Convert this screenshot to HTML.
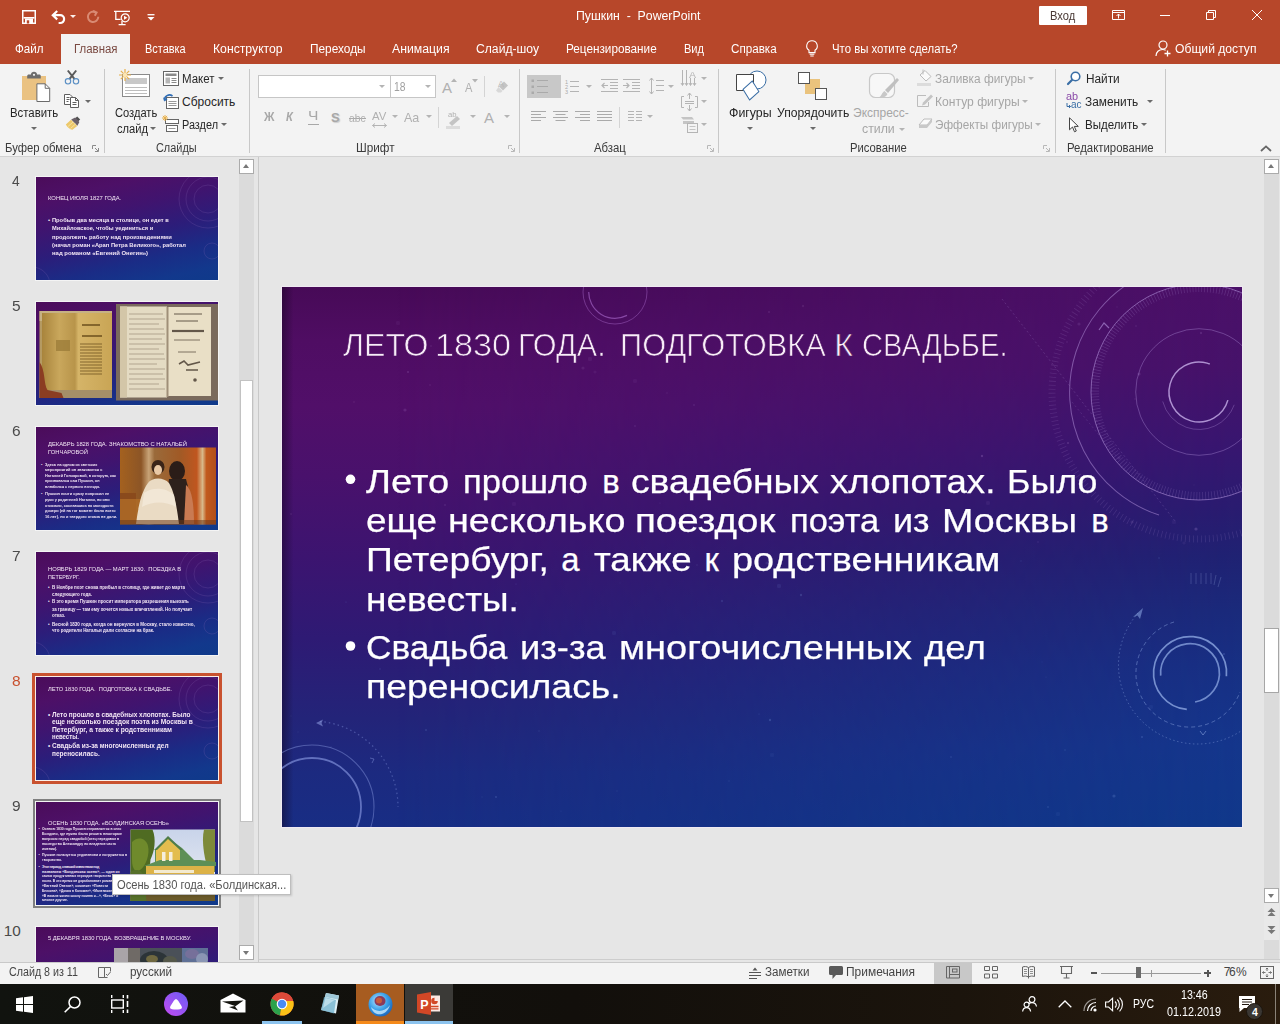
<!DOCTYPE html>
<html lang="ru">
<head>
<meta charset="utf-8">
<title>Пушкин - PowerPoint</title>
<style>
*{box-sizing:border-box;margin:0;padding:0}
html,body{width:1280px;height:1024px;overflow:hidden}
body{position:relative;background:#e6e6e6;font-family:"Liberation Sans",sans-serif;font-size:12px;color:#262626}
.a{position:absolute}
.t{position:absolute;white-space:pre;font-family:"Liberation Sans",sans-serif}
svg{position:absolute;overflow:visible}
.sep{position:absolute;width:1px;background:#c8c8c8;top:69px;height:84px}
.dd{position:absolute;width:0;height:0;border-left:3px solid transparent;border-right:3px solid transparent;border-top:3px solid #6a6a6a}
.ddl{border-top-color:#b4b4b4}
.thumb{position:absolute;left:36px;width:182px;height:103px;overflow:hidden;background:linear-gradient(166deg,#4b0c5a 0%,#4d1067 18%,#40146f 36%,#2c1d7a 56%,#1a2c86 74%,#12388c 90%,#0f3a8a 100%);outline:1px solid #f4f4f4}
.num{position:absolute;left:11px;font-size:16.500px;color:#505050;line-height:18px}
.tt{position:absolute;white-space:pre;color:#f4e9f6;font-family:"Liberation Sans",sans-serif}
</style>
</head>
<body>

<!-- title bar + tabs -->
<div class="a" style="left:0;top:0;width:1280px;height:64px;background:#b7472a"></div>
<div class="a" style="left:61px;top:34px;width:69px;height:31px;background:#f3f3f3"></div>
<!-- quick access icons -->
<svg style="left:22px;top:10px" width="14" height="14" viewBox="0 0 14 14"><path d="M0.750 0.750h12.500v12.500H0.750z" fill="none" stroke="#fff" stroke-width="1.500"/><rect x="1.500" y="7" width="11" height="1.600" fill="#fff"/><rect x="3" y="8.500" width="8" height="5" fill="#fff"/><rect x="4.800" y="10.300" width="2.400" height="3.200" fill="#b7472a"/></svg>
<svg style="left:51px;top:10px" width="15" height="14" viewBox="0 0 15 14"><path d="M6.200 1 1.800 5.200 6.200 9.400M2.200 5.200h7a3.900 3.900 0 0 1 0 7.800H7.600" fill="none" stroke="#fff" stroke-width="2.200" stroke-linejoin="miter"/></svg>
<div class="dd" style="left:70px;top:15px;border-top-color:#fbeee9"></div>
<svg style="left:86px;top:10px" width="14" height="13" viewBox="0 0 14 13"><path d="M9.800 2.400A5.200 5.200 0 1 0 12.300 6.800M7.200 0.800l3.400 1.700-1.800 3.200" fill="none" stroke="#d98a73" stroke-width="2"/></svg>
<svg style="left:114px;top:9.500px" width="17" height="16" viewBox="0 0 17 16"><path d="M0 1.300h16M1.800 1.600v7.800h4.800M8 11v3.400M4.600 14.700h7" fill="none" stroke="#fff" stroke-width="1.300"/><circle cx="11.200" cy="7.800" r="4" fill="#b7472a" stroke="#fff" stroke-width="1.200"/><path d="M10 5.800v4l3.300-2z" fill="#fff"/></svg>
<svg style="left:147px;top:14px" width="8" height="7" viewBox="0 0 8 7"><path d="M0.500 0.700h7" stroke="#fff" stroke-width="1.300"/><path d="M0.500 3h7L4 6.500z" fill="#fff"/></svg>
<!-- sign-in button -->
<div class="a" style="left:1039px;top:6px;width:48px;height:19px;background:#fff;border-radius:1px"></div>
<!-- window controls -->
<svg style="left:1112px;top:10px" width="13" height="10" viewBox="0 0 13 10"><path d="M0.5 0.5h12v9h-12zM0.5 2.500h12" fill="none" stroke="#fff" stroke-width="1"/><path d="M6.500 8.500V4M4.500 6 6.500 4l2 2" fill="none" stroke="#fff" stroke-width="1"/></svg>
<div class="a" style="left:1160px;top:15px;width:10px;height:1px;background:#fff"></div>
<svg style="left:1206px;top:10px" width="10" height="10" viewBox="0 0 10 10"><path d="M0.5 2.500h7v7h-7z M2.500 2.500v-2h7v7h-2" fill="none" stroke="#fff" stroke-width="1"/></svg>
<svg style="left:1252px;top:10px" width="10" height="10" viewBox="0 0 10 10"><path d="M0 0l10 10M10 0 0 10" fill="none" stroke="#fff" stroke-width="1"/></svg>
<!-- lightbulb -->
<svg style="left:806px;top:40px" width="12" height="17" viewBox="0 0 12 17"><path d="M6 0.7a5.2 5.2 0 0 0-3 9.5v2.4h6v-2.400A5.2 5.2 0 0 0 6 0.700zM3.600 14.300h4.800M4.300 16h3.400" fill="none" stroke="#fff" stroke-width="1.1"/></svg>
<!-- share person -->
<svg style="left:1155px;top:40px" width="16" height="17" viewBox="0 0 16 17"><circle cx="8" cy="5" r="4" fill="none" stroke="#fff" stroke-width="1.2"/><path d="M1 16c0-4 3-6.500 6.500-6.500 1.200 0 2.300 0.300 3.200 0.800" fill="none" stroke="#fff" stroke-width="1.2"/><path d="M12.500 10.500v6M9.500 13.500h6" stroke="#fff" stroke-width="1.3"/></svg>

<!-- ribbon -->
<div class="a" style="left:0;top:64px;width:1280px;height:93px;background:#f3f3f3;border-bottom:1px solid #d2d2d2"></div>
<div class="sep" style="left:104px"></div><div class="sep" style="left:249px"></div><div class="sep" style="left:519px"></div><div class="sep" style="left:718px"></div><div class="sep" style="left:1055px"></div><div class="sep" style="left:1165px"></div>
<!-- group launchers -->
<svg style="left:92px;top:145px" width="7" height="7" viewBox="0 0 7 7"><path d="M0.500 4V0.500H4M6.500 3v3.500H3M3 3l3 3" fill="none" stroke="#8a8a8a" stroke-width="1"/></svg>
<svg style="left:508px;top:145px" width="7" height="7" viewBox="0 0 7 7"><path d="M0.500 4V0.500H4M6.500 3v3.500H3M3 3l3 3" fill="none" stroke="#b8b8b8" stroke-width="1"/></svg>
<svg style="left:707px;top:145px" width="7" height="7" viewBox="0 0 7 7"><path d="M0.500 4V0.500H4M6.500 3v3.500H3M3 3l3 3" fill="none" stroke="#b8b8b8" stroke-width="1"/></svg>
<svg style="left:1043px;top:145px" width="7" height="7" viewBox="0 0 7 7"><path d="M0.500 4V0.500H4M6.500 3v3.500H3M3 3l3 3" fill="none" stroke="#b8b8b8" stroke-width="1"/></svg>
<svg style="left:1260px;top:145px" width="12" height="7" viewBox="0 0 12 7"><path d="M1 6l5-4.600L11 6" fill="none" stroke="#666" stroke-width="1.800"/></svg>

<!-- CLIPBOARD -->
<svg style="left:20px;top:70px" width="32" height="34" viewBox="0 0 32 34"><rect x="2" y="6" width="24" height="24" fill="#eac282"/><path d="M7.200 8.400v-2.400c0-1 .6-1.600 1.600-1.600h2.200c0-1.600 1.200-2.600 3-2.600s3 1 3 2.600h2.200c1 0 1.600.6 1.600 1.600v2.400z" fill="#6d6d6d"/><circle cx="14" cy="4.800" r="1.100" fill="#f3f3f3"/><path d="M16.900 13.800h8.300l4.500 4.500v13.200H16.900z" fill="#fff" stroke="#6a6a6a" stroke-width="1"/><path d="M25.200 13.800v4.500h4.500" fill="none" stroke="#6a6a6a" stroke-width="1"/></svg>
<div class="dd" style="left:31px;top:127px"></div>
<svg style="left:64px;top:70px" width="16" height="15" viewBox="0 0 16 15"><path d="M3.800 0.500 10.600 9.200M12.200 0.500 5.400 9.200" stroke="#5a5a5a" stroke-width="2" fill="none"/><circle cx="4" cy="11.300" r="2.700" fill="#f3f3f3" stroke="#5a8fc4" stroke-width="1.150"/><circle cx="12" cy="11.300" r="2.700" fill="#f3f3f3" stroke="#5a8fc4" stroke-width="1.150"/></svg>
<svg style="left:64px;top:94px" width="16" height="14" viewBox="0 0 16 14"><path d="M0.500 0.500h5.500l2.500 2.500v7.500h-8z" fill="#fff" stroke="#5f5f5f" stroke-width="1"/><path d="M2.500 3.500h3M2.500 5.500h3M2.500 7.500h2" stroke="#5f5f5f" stroke-width="1"/><path d="M6.500 3.500h5l3 3v7h-8z" fill="#fff" stroke="#5f5f5f" stroke-width="1"/><path d="M11.500 3.500v3h3M8.500 8.500h4M8.500 10.500h4" fill="none" stroke="#5f5f5f" stroke-width="1"/></svg>
<div class="dd" style="left:85px;top:100px"></div>
<svg style="left:65px;top:116px" width="16" height="14" viewBox="0 0 16 14"><path d="M12.200 0.500l3 3-2.200 2-3-3z" fill="#4f4f4f"/><path d="M6.200 3.600l4-2 4.200 4.400-2 3.800z" fill="#6a6068"/><path d="M0.800 8.400 6 3.800l6.200 6.200-4.800 3.800c-2.600-.6-5-2.600-6.600-5.400z" fill="#ecc86a"/><path d="M3 10.500l5-4.500M5.500 12.500l5-4.500" stroke="#f7e3a6" stroke-width=".9"/></svg>

<!-- SLIDES -->
<svg style="left:119px;top:69px" width="32" height="29" viewBox="0 0 32 29"><rect x="3.500" y="5.500" width="27" height="22" fill="#fff" stroke="#8a8a8a"/><rect x="6" y="9" width="22" height="6" fill="#c8c8c8"/><path d="M6 18.500h22M6 21.500h22M6 24.500h22" stroke="#bdbdbd" stroke-width="1"/><path d="M6 0v12M0 6h12M1.800 1.800l8.400 8.400M10.200 1.800l-8.400 8.400" stroke="#e8b04a" stroke-width="1.200"/><circle cx="6" cy="6" r="2.200" fill="#fbe6b4"/></svg>
<div class="dd" style="left:150px;top:127px"></div>
<svg style="left:163px;top:71px" width="16" height="15" viewBox="0 0 16 15"><rect x="0.500" y="0.500" width="15" height="14" fill="#fff" stroke="#666"/><rect x="2.500" y="2.500" width="11" height="2.500" fill="#8a8a8a"/><rect x="2.500" y="6.500" width="4.500" height="6" fill="#b5b5b5"/><path d="M8.500 7.500h5M8.500 9.500h5M8.500 11.500h5" stroke="#8a8a8a"/></svg>
<div class="dd" style="left:218px;top:77px"></div>
<svg style="left:163px;top:93px" width="16" height="16" viewBox="0 0 16 16"><rect x="3.500" y="4.500" width="12" height="11" fill="#fff" stroke="#666"/><path d="M5.500 8.500h8M5.500 10.500h8M5.500 12.500h8" stroke="#9a9a9a"/><path d="M1.500 7.500a5 5 0 0 1 8-4.500" fill="none" stroke="#2f6db5" stroke-width="1.600"/><path d="M0 4.500l1.500 4 3.200-2.500z" fill="#2f6db5"/></svg>
<svg style="left:162px;top:115px" width="17" height="17" viewBox="0 0 17 17"><rect x="3.500" y="4.500" width="13" height="4" fill="#fff" stroke="#666"/><rect x="4.500" y="10.500" width="11" height="6" fill="#fff" stroke="#666"/><path d="M6.500 13.500h7" stroke="#999"/><path d="M3 0v6M0 3h6M0.900 0.900l4.200 4.200M5.100 0.900l-4.200 4.200" stroke="#e8b04a" stroke-width="1"/></svg>
<div class="dd" style="left:221px;top:123px"></div>

<!-- FONT -->
<div class="a" style="left:258px;top:75px;width:133px;height:23px;background:#fff;border:1px solid #c6c6c6"></div>
<div class="a" style="left:390px;top:75px;width:46px;height:23px;background:#fff;border:1px solid #c6c6c6"></div>
<div class="dd ddl" style="left:379px;top:85px"></div>
<div class="dd ddl" style="left:425px;top:85px"></div>
<div class="a" style="left:484px;top:76px;width:1px;height:21px;background:#d4d4d4"></div>
<div class="a" style="left:438px;top:107px;width:1px;height:21px;background:#d4d4d4"></div>
<svg style="left:451px;top:78px" width="6" height="4" viewBox="0 0 6 4"><path d="M0 4l3-3.500L6 4z" fill="#b4b4b4"/></svg>
<svg style="left:472px;top:79px" width="6" height="4" viewBox="0 0 6 4"><path d="M0 0l3 3.500L6 0z" fill="#b4b4b4"/></svg>
<svg style="left:493px;top:78px" width="16" height="16" viewBox="0 0 16 16"><path d="M6 8.500l5-5 4 4-5 5z" fill="#c4c4c4"/><path d="M5.500 9l4 4-1.500 1.500h-3l-2-2z" fill="#d8d8d8"/></svg>
<div class="dd ddl" style="left:392px;top:115px"></div>
<div class="dd ddl" style="left:426px;top:115px"></div>
<div class="dd ddl" style="left:470px;top:115px"></div>
<div class="dd ddl" style="left:504px;top:115px"></div>
<div class="a" style="left:308px;top:124px;width:11px;height:1px;background:#a8a8a8"></div>
<div class="a" style="left:349px;top:118px;width:17px;height:1px;background:#a8a8a8"></div>
<svg style="left:372px;top:123px" width="15" height="5" viewBox="0 0 15 5"><path d="M0.500 2.500h14M3 0.500l-2.500 2 2.500 2M12 0.500l2.500 2-2.500 2" fill="none" stroke="#b4b4b4" stroke-width="1"/></svg>
<svg style="left:446px;top:119px" width="17" height="10" viewBox="0 0 17 10"><path d="M3 4l8-7 3 3-8 7z" fill="#c4c4c4"/><rect x="0" y="7" width="14" height="3" fill="#dcdcdc"/></svg>

<!-- PARAGRAPH -->
<div class="a" style="left:527px;top:75px;width:34px;height:23px;background:#c8c8c8"></div>
<svg style="left:531px;top:78px" width="18" height="16" viewBox="0 0 18 16"><path d="M6 2.500h11M6 8.500h11M6 14.500h11" stroke="#aaa" stroke-width="1"/><rect x="0.500" y="1.500" width="2.500" height="2.500" fill="#aaa"/><rect x="0.500" y="7.500" width="2.500" height="2.500" fill="#aaa"/><rect x="0.500" y="13.500" width="2.500" height="2.500" fill="#aaa"/></svg>
<svg style="left:570px;top:80px" width="10" height="14" viewBox="0 0 10 14"><path d="M0 1.500h9M0 6.500h9M0 11.500h9" stroke="#b4b4b4"/></svg>
<div class="dd ddl" style="left:586px;top:85px"></div>
<svg style="left:601px;top:79px" width="17" height="14" viewBox="0 0 17 14"><path d="M0 0.500h17M9 3.500h8M9 6.500h8M9 9.500h8M0 12.500h17" stroke="#b4b4b4"/><path d="M7 6.500H1M3.500 4l-2.500 2.500 2.500 2.500" fill="none" stroke="#b4b4b4" stroke-width="1.200"/></svg>
<svg style="left:623px;top:79px" width="17" height="14" viewBox="0 0 17 14"><path d="M0 0.500h17M9 3.500h8M9 6.500h8M9 9.500h8M0 12.500h17" stroke="#b4b4b4"/><path d="M0 6.500h6M3.500 4l2.500 2.500-2.500 2.500" fill="none" stroke="#b4b4b4" stroke-width="1.200"/></svg>
<svg style="left:649px;top:77px" width="15" height="18" viewBox="0 0 15 18"><path d="M7 3.500h8M7 8.500h8M7 13.500h8" stroke="#b4b4b4"/><path d="M2.500 1v16M0.500 3.500l2-2.500 2 2.500M0.500 14.500l2 2.500 2-2.500" fill="none" stroke="#b4b4b4"/></svg>
<div class="dd ddl" style="left:668px;top:85px"></div>
<svg style="left:681px;top:70px" width="16" height="17" viewBox="0 0 16 17"><path d="M1.500 0v15M5.500 0v15M9.500 8v7M13.500 8v7M0 13l1.500 2.500 1.500-2.500M4 13l1.500 2.500 1.500-2.500M8 13l1.500 2.500 1.500-2.500M12 13l1.500 2.500 1.500-2.500" fill="none" stroke="#b4b4b4"/></svg>
<div class="dd ddl" style="left:701px;top:77px"></div>
<svg style="left:681px;top:93px" width="17" height="18" viewBox="0 0 17 18"><path d="M3 3.500h-2.500v11H3M14 3.500h2.500v11H14M4 8.500h9M4 10.500h9" fill="none" stroke="#b4b4b4"/><path d="M8.500 0v6M6.500 2.500l2-2.500 2 2.500M8.500 18v-6M6.500 15.500l2 2.500 2-2.500" fill="none" stroke="#b4b4b4"/></svg>
<div class="dd ddl" style="left:701px;top:100px"></div>
<svg style="left:681px;top:116px" width="17" height="17" viewBox="0 0 17 17"><path d="M0 1h11l2 2.500H2zM2 5h11v3H2z" fill="#c4c4c4"/><rect x="6.500" y="7.500" width="10" height="9" fill="#f3f3f3" stroke="#b4b4b4"/><path d="M8.500 10.500h6M8.500 13.500h6" stroke="#c4c4c4"/></svg>
<div class="dd ddl" style="left:701px;top:123px"></div>
<svg style="left:531px;top:111px" width="15" height="12" viewBox="0 0 15 12"><path d="M0 0.500h15M0 3.500h10M0 6.500h15M0 9.500h10" stroke="#aaa"/></svg>
<svg style="left:553px;top:111px" width="15" height="12" viewBox="0 0 15 12"><path d="M0 0.500h15M2.500 3.500h10M0 6.500h15M2.500 9.500h10" stroke="#aaa"/></svg>
<svg style="left:575px;top:111px" width="15" height="12" viewBox="0 0 15 12"><path d="M0 0.500h15M5 3.500h10M0 6.500h15M5 9.500h10" stroke="#aaa"/></svg>
<svg style="left:597px;top:111px" width="15" height="12" viewBox="0 0 15 12"><path d="M0 0.500h15M0 3.500h15M0 6.500h15M0 9.500h15" stroke="#aaa"/></svg>
<div class="a" style="left:619px;top:107px;width:1px;height:21px;background:#d4d4d4"></div>
<svg style="left:628px;top:111px" width="15" height="12" viewBox="0 0 15 12"><path d="M0 0.500h6M8 0.500h6M0 3.500h6M8 3.500h6M0 6.500h6M8 6.500h6M0 9.500h6M8 9.500h6" stroke="#b4b4b4"/></svg>
<div class="dd ddl" style="left:647px;top:115px"></div>

<!-- DRAWING -->
<svg style="left:735px;top:70px" width="32" height="32" viewBox="0 0 32 32"><circle cx="22" cy="10" r="9" fill="#fff" stroke="#3a6ea5" stroke-width="1"/><path d="M1.500 4.500h17v16h-17z" fill="#fff" stroke="#444" stroke-width="1"/><path d="M16 11l8 9.500-8 9.500-8-9.500z" fill="#fff" stroke="#3a6ea5" stroke-width="1" transform="rotate(8 16 20)"/></svg>
<div class="dd" style="left:747px;top:127px"></div>
<svg style="left:798px;top:72px" width="29" height="29" viewBox="0 0 29 29"><rect x="7" y="7" width="15" height="15" fill="#eac37d"/><rect x="0.500" y="0.500" width="11" height="11" fill="#fff" stroke="#555"/><rect x="17.500" y="16.500" width="11" height="11" fill="#fff" stroke="#555"/></svg>
<div class="dd" style="left:810px;top:127px"></div>
<svg style="left:868px;top:72px" width="32" height="32" viewBox="0 0 32 32"><rect x="1.500" y="1.500" width="25" height="24" rx="6" fill="#f7f7f7" stroke="#c8c8c8" stroke-width="1.200"/><path d="M29 6l2 2-11 13-3-3z" fill="#c0c0c0"/><path d="M16.500 19l3 3c-2 4-6 4-8 3 2-1 2-4 5-6z" fill="#c8c8c8"/></svg>
<div class="dd ddl" style="left:899px;top:128px"></div>
<svg style="left:917px;top:69px" width="16" height="17" viewBox="0 0 16 17"><path d="M3 6l5-4.500 6 6-5 4.500z" fill="#fafafa" stroke="#bcbcbc"/><path d="M6 0.500v5" stroke="#bcbcbc"/><rect x="0" y="14" width="14" height="3" fill="#dcdcdc"/></svg>
<svg style="left:917px;top:93px" width="17" height="15" viewBox="0 0 17 15"><path d="M9 2.500H0.500v11h11V9" fill="none" stroke="#bcbcbc"/><path d="M6 9.500l8-8 2 2-8 8-3 1z" fill="#c4c4c4"/></svg>
<svg style="left:917px;top:117px" width="17" height="14" viewBox="0 0 17 14"><path d="M2 8l5-6h8l-5 6z" fill="#fafafa" stroke="#bcbcbc"/><path d="M2 8h8l5-6v3l-5 6H2z" fill="#c8c8c8"/></svg>
<div class="dd ddl" style="left:1028px;top:77px"></div>
<div class="dd ddl" style="left:1022px;top:100px"></div>
<div class="dd ddl" style="left:1035px;top:123px"></div>

<!-- EDITING -->
<svg style="left:1067px;top:71px" width="14" height="14" viewBox="0 0 14 14"><circle cx="8.500" cy="5.500" r="4.300" fill="#fff" stroke="#3a6ea5" stroke-width="1.600"/><path d="M5.200 8.800 1 13" stroke="#3a6ea5" stroke-width="2.200" stroke-linecap="round"/></svg>
<svg style="left:1068px;top:117px" width="12" height="16" viewBox="0 0 12 16"><path d="M1.500 0.800v12l3-2.800 2 4.800 1.800-0.800-2-4.600h4z" fill="#fff" stroke="#444" stroke-width="1"/></svg>
<svg style="left:1066px;top:103px" width="5" height="6" viewBox="0 0 5 6"><path d="M1 0v3.500h3.500M3 2l1.500 1.500L3 5" fill="none" stroke="#3a6ea5" stroke-width="1"/></svg>
<div class="dd" style="left:1147px;top:100px"></div>
<div class="dd" style="left:1141px;top:123px"></div>

<!-- left pane -->
<div class="a" style="left:258px;top:157px;width:1px;height:805px;background:#c9c9c9"></div>
<div class="a" style="left:239px;top:159px;width:15px;height:801px;background:#dbdbdb"></div>
<div class="a" style="left:239px;top:159px;width:15px;height:15px;background:#fff;border:1px solid #ababab"></div>
<div class="a" style="left:239px;top:945px;width:15px;height:15px;background:#fff;border:1px solid #ababab"></div>
<div class="a" style="left:243px;top:164px;width:0;height:0;border-left:3.500px solid transparent;border-right:3.500px solid transparent;border-bottom:4px solid #777"></div>
<div class="a" style="left:243px;top:951px;width:0;height:0;border-left:3.500px solid transparent;border-right:3.500px solid transparent;border-top:4px solid #777"></div>
<div class="a" style="left:240px;top:380px;width:13px;height:442px;background:#fff;border:1px solid #c2c2c2"></div>


<!-- selection + hover frames -->
<div class="a" style="left:32px;top:673px;width:190px;height:111px;border:3px solid #c9522f;background:#f6e3dc"></div>
<div class="a" style="left:33px;top:799px;width:188px;height:109px;border:2px solid #7f7f7f;background:#f4f4f4"></div>

<!-- slide 4 -->
<div class="thumb" style="top:177px"><svg style="left:0;top:0" width="182" height="103" viewBox="0 0 182 103"><g fill="none" stroke="#8a6bb8" stroke-opacity=".35" stroke-width=".6"><circle cx="172" cy="22" r="14"/><circle cx="172" cy="22" r="22"/><circle cx="172" cy="22" r="29"/><circle cx="176" cy="74" r="8"/><circle cx="-4" cy="108" r="18"/></g></svg></div>
<!-- slide 5 -->
<div class="thumb" style="top:302px">
<svg style="left:0;top:0;filter:blur(.5px)" width="182" height="103" viewBox="0 0 182 103">
<defs><linearGradient id="pgL" x1="0" x2="1"><stop offset="0" stop-color="#a8843c"/><stop offset=".25" stop-color="#c9a75c"/><stop offset=".47" stop-color="#b8944a"/><stop offset=".52" stop-color="#d5b468"/><stop offset="1" stop-color="#c9a555"/></linearGradient></defs>
<rect x="3.500" y="9" width="72.500" height="87" fill="#b59a62"/>
<rect x="3.500" y="9" width="72.500" height="10" fill="#c6b184"/>
<rect x="6" y="11" width="70" height="79" fill="url(#pgL)"/>
<rect x="3.500" y="88" width="72.500" height="8" fill="#a58f68"/>
<path d="M3.500 60c6 8 4 22 8 28l14 3 2 5H3.500z" fill="#8b3d22"/>
<rect x="20" y="38" width="14" height="11" fill="#9c7d3a" opacity=".8"/>
<g stroke="#6b4f1c" stroke-width="1.100" opacity=".75"><path d="M46 23h18M46 34h20" stroke-width="2"/><path d="M44 42h22M44 45h22M44 48h22M44 51h22M44 54h22M44 57h22M44 60h22M44 63h22M44 66h22M44 69h22M44 72h22"/></g>
<rect x="80" y="2" width="102" height="96.500" fill="#7a6a5c"/>
<rect x="84" y="4.500" width="47" height="91" fill="#e4dbc3"/>
<rect x="84" y="4.500" width="7" height="91" fill="#d3c6a8"/>
<rect x="132" y="5" width="43" height="89" fill="#e9dfc6"/>
<rect x="130.500" y="5" width="2" height="90" fill="#9f8f78"/>
<g stroke="#8b7d68" stroke-width=".7" opacity=".8"><path d="M93 12h34M93 17h36M93 22h30M93 27h35M93 32h36M93 37h33M93 42h36M93 47h30M93 52h35M93 57h36M93 62h28M93 67h36M93 72h34M93 77h36M93 82h30M93 87h36"/></g>
<g stroke="#4c4034" opacity=".85"><path d="M138 12h28M140 19h22" stroke-width="1"/><path d="M136 29h32" stroke-width="2.200"/><path d="M138 38h26M142 50h18" stroke-width=".8"/><path d="M143 62l5-3 4 4 12-3M150 68h12" stroke-width="1.600" fill="none"/><circle cx="159" cy="78" r="1.800" fill="#4c4034" stroke="none"/></g>
</svg></div>
<!-- slide 6 -->
<div class="thumb" style="top:427px">
<svg style="left:0;top:0;filter:blur(.6px)" width="182" height="103" viewBox="0 0 182 103">
<defs><linearGradient id="p6" x1="0" x2="1"><stop offset="0" stop-color="#a4611f"/><stop offset=".22" stop-color="#8c5526"/><stop offset=".3" stop-color="#c8a377"/><stop offset=".36" stop-color="#9a6a3a"/><stop offset=".62" stop-color="#a05a26"/><stop offset=".8" stop-color="#c0561f"/><stop offset=".86" stop-color="#d8b98a"/><stop offset=".9" stop-color="#c25a1e"/><stop offset="1" stop-color="#b24f1a"/></linearGradient></defs>
<rect x="84" y="20.500" width="96" height="77" fill="url(#p6)"/>
<rect x="84" y="66" width="16" height="31" fill="#8a4a1c"/>
<path d="M84 72h22v25H84z" fill="#b5702a" opacity=".7"/>
<ellipse cx="141" cy="44" rx="8" ry="10" fill="#2b1d18"/>
<path d="M133 52c-2 14 0 34 2 45h18c2-14 1-32-3-45z" fill="#2e211c"/>
<ellipse cx="122" cy="40" rx="6.500" ry="7" fill="#3a2418"/>
<ellipse cx="122" cy="43" rx="4" ry="5" fill="#e9c9a6"/>
<path d="M112 56c4-6 16-6 21 0 6 10 8 26 10 41H100c2-14 4-30 12-41z" fill="#eadbc4"/>
<path d="M108 66c8-6 22-6 30 2l2 12c-10-6-24-6-34 0z" fill="#f4eadb" opacity=".8"/>
<path d="M150 58c6 4 8 20 8 39h-10z" fill="#c97a52"/>
<rect x="84" y="93" width="96" height="4.500" fill="#6b3a1a" opacity=".55"/>
</svg></div>
<!-- slide 7 -->
<div class="thumb" style="top:552px"><svg style="left:0;top:0" width="182" height="103" viewBox="0 0 182 103"><g fill="none" stroke="#8a6bb8" stroke-opacity=".35" stroke-width=".6"><circle cx="172" cy="22" r="14"/><circle cx="172" cy="22" r="22"/><circle cx="172" cy="22" r="29"/><circle cx="176" cy="74" r="8"/><circle cx="-4" cy="108" r="18"/></g></svg></div>
<!-- slide 8 -->
<div class="thumb" style="top:677px;outline:1px solid #f9efe9"><svg style="left:0;top:0" width="182" height="103" viewBox="0 0 182 103"><g fill="none" stroke="#8a6bb8" stroke-opacity=".35" stroke-width=".6"><circle cx="172" cy="22" r="14"/><circle cx="172" cy="22" r="22"/><circle cx="172" cy="22" r="29"/><circle cx="176" cy="74" r="8"/><circle cx="-4" cy="108" r="18"/></g></svg></div>
<!-- slide 9 -->
<div class="thumb" style="top:802px">
<svg style="left:0;top:0;filter:blur(.5px)" width="182" height="103" viewBox="0 0 182 103">
<defs><linearGradient id="sky9" x1="0" y1="0" x2="0" y2="1"><stop offset="0" stop-color="#c9d4ea"/><stop offset="1" stop-color="#eef0f4"/></linearGradient></defs>
<rect x="94.500" y="27.500" width="84.500" height="71.500" fill="url(#sky9)"/>
<path d="M94.500 27.500h22c4 10 2 22-2 30l-4 41.500H94.500z" fill="#4f6b22"/>
<path d="M96 40c6-6 14-4 16 4s-2 20-8 24-8-4-8-10z" fill="#6f8a2c"/>
<path d="M168 27.500h11V70h-6c-4-10-8-30-5-42.500z" fill="#7d8a3a"/>
<path d="M119 48l13-12 14 10 18 18v6h-45z" fill="#5d8f56"/>
<path d="M120 47l12-11 12 11v20h-24z" fill="#e3bd4e"/>
<path d="M132 34l-14 14h3l11-11 12 11h3z" fill="#4f7d4a"/>
<rect x="110" y="64" width="68" height="35" fill="#dcb247"/>
<path d="M108 64h72v-4l-16-2h-40z" fill="#5d8f56"/>
<rect x="118" y="68" width="40" height="3" fill="#f3ead0"/>
<g fill="#f6efdc"><rect x="126" y="50" width="3.500" height="9"/><rect x="133" y="50" width="3.500" height="9"/><rect x="120" y="74" width="4" height="18"/><rect x="130" y="74" width="4" height="18"/><rect x="141" y="74" width="4" height="18"/><rect x="152" y="74" width="4" height="18"/><rect x="166" y="72" width="7" height="12"/></g>
<rect x="94.500" y="92" width="84.500" height="7" fill="#6a5a2a"/>
<path d="M94.500 70c6-4 12-2 14 6l2 23H94.500z" fill="#56702a"/>
</svg></div>
<!-- slide 10 (clipped by status bar) -->
<div class="thumb" style="top:927px;height:36px;background-size:182px 103px;background-repeat:no-repeat">
<svg style="left:0;top:0;filter:blur(.6px)" width="182" height="36" viewBox="0 0 182 36"><rect x="78" y="21" width="94" height="20" fill="#4a5058"/><rect x="78" y="21" width="14" height="20" fill="#a9a4a8"/><rect x="92" y="21" width="12" height="20" fill="#6f6a66"/><ellipse cx="118" cy="33" rx="14" ry="9" fill="#2c3438"/><ellipse cx="116" cy="32" rx="6" ry="4" fill="#6f6840"/><ellipse cx="134" cy="34" rx="7" ry="5" fill="#55584a"/><rect x="146" y="21" width="26" height="20" fill="#5f7096"/><ellipse cx="156" cy="27" rx="7" ry="5" fill="#76709a"/><ellipse cx="166" cy="32" rx="6" ry="6" fill="#8a96b4"/></svg></div>
<!-- tooltip -->
<div class="a" style="left:112px;top:874px;width:179px;height:21px;background:#fff;border:1px solid #bebebe;box-shadow:1px 1px 2px rgba(0,0,0,.15);z-index:5"></div>

<!-- main editing area -->
<div class="a" style="left:1264px;top:159px;width:15px;height:801px;background:#dbdbdb"></div>
<div class="a" style="left:1264px;top:159px;width:15px;height:15px;background:#fff;border:1px solid #ababab"></div>
<div class="a" style="left:1268px;top:164px;width:0;height:0;border-left:3.500px solid transparent;border-right:3.500px solid transparent;border-bottom:4px solid #777"></div>
<div class="a" style="left:1264px;top:888px;width:15px;height:15px;background:#fff;border:1px solid #ababab"></div>
<div class="a" style="left:1268px;top:894px;width:0;height:0;border-left:3.500px solid transparent;border-right:3.500px solid transparent;border-top:4px solid #777"></div>
<div class="a" style="left:1264px;top:628px;width:15px;height:65px;background:#fff;border:1px solid #a6a6a6"></div>
<div class="a" style="left:1264px;top:903px;width:15px;height:37px;background:#e9e9e9"></div>
<svg style="left:1267px;top:907px" width="9" height="28" viewBox="0 0 9 28"><path d="M0.500 5l4-4 4 4zM0.500 9l4-4 4 4z M0.500 19l4 4 4-4zM0.500 23l4 4 4-4z" fill="#777"/></svg>
<!-- slide -->
<div class="a" id="slide" style="left:282px;top:287px;width:960px;height:540px;overflow:hidden;outline:1px solid #efe9f2;background:#3a1470">
<svg style="left:0;top:0" width="960" height="540" viewBox="0 0 960 540">
<defs>
<linearGradient id="gL" x1="0" y1="0" x2="0" y2="1"><stop offset="0" stop-color="#470a57"/><stop offset=".1" stop-color="#4f0d63"/><stop offset=".22" stop-color="#510f69"/><stop offset=".35" stop-color="#49116c"/><stop offset=".5" stop-color="#3c1470"/><stop offset=".65" stop-color="#2e1a74"/><stop offset=".8" stop-color="#232479"/><stop offset=".9" stop-color="#1c2a80"/><stop offset="1" stop-color="#182d84"/></linearGradient>
<linearGradient id="gR" x1="0" y1="0" x2="0" y2="1"><stop offset="0" stop-color="#4b1068"/><stop offset=".15" stop-color="#46126a"/><stop offset=".3" stop-color="#371670"/><stop offset=".42" stop-color="#281c70"/><stop offset=".5" stop-color="#1f2273"/><stop offset=".6" stop-color="#1a2a7b"/><stop offset=".7" stop-color="#173084"/><stop offset=".85" stop-color="#14368c"/><stop offset="1" stop-color="#10388a"/></linearGradient>
<linearGradient id="gM" x1="0" y1="0" x2="1" y2="0"><stop offset="0" stop-color="#000"/><stop offset=".12" stop-color="#000"/><stop offset="1" stop-color="#fff"/></linearGradient>
<mask id="mR"><rect width="960" height="540" fill="url(#gM)"/></mask>
<linearGradient id="gV" x1="0" y1="0" x2="1" y2="0"><stop offset="0" stop-color="#12041c" stop-opacity=".45"/><stop offset=".012" stop-color="#12041c" stop-opacity="0"/></linearGradient>
</defs>
<rect width="960" height="540" fill="url(#gL)"/>
<rect width="960" height="540" fill="url(#gR)" mask="url(#mR)"/>
<rect width="960" height="540" fill="url(#gV)"/>
<!-- stars -->
<g><circle cx="313" cy="85" r="1.6" fill="#c9a0e8" fill-opacity="0.07"/><circle cx="785" cy="55" r="1.2" fill="#c9a0e8" fill-opacity="0.07"/><circle cx="487" cy="25" r="1" fill="#c9a0e8" fill-opacity="0.13"/><circle cx="234" cy="297" r="0.6" fill="#8fb0f0" fill-opacity="0.19"/><circle cx="123" cy="123" r="1.6" fill="#c9a0e8" fill-opacity="0.15"/><circle cx="64" cy="315" r="0.6" fill="#8fb0f0" fill-opacity="0.22"/><circle cx="49" cy="460" r="0.8" fill="#8fb0f0" fill-opacity="0.13"/><circle cx="519" cy="308" r="1.2" fill="#8fb0f0" fill-opacity="0.19"/><circle cx="177" cy="313" r="1.6" fill="#8fb0f0" fill-opacity="0.09"/><circle cx="98" cy="382" r="1.2" fill="#8fb0f0" fill-opacity="0.07"/><circle cx="201" cy="366" r="1" fill="#8fb0f0" fill-opacity="0.18"/><circle cx="447" cy="494" r="0.8" fill="#8fb0f0" fill-opacity="0.11"/><circle cx="760" cy="375" r="0.7" fill="#8fb0f0" fill-opacity="0.07"/><circle cx="290" cy="267" r="0.8" fill="#c9a0e8" fill-opacity="0.18"/><circle cx="279" cy="524" r="0.6" fill="#8fb0f0" fill-opacity="0.14"/><circle cx="162" cy="186" r="1" fill="#c9a0e8" fill-opacity="0.13"/><circle cx="919" cy="46" r="1.2" fill="#c9a0e8" fill-opacity="0.15"/><circle cx="837" cy="171" r="1.6" fill="#c9a0e8" fill-opacity="0.12"/><circle cx="477" cy="427" r="0.6" fill="#8fb0f0" fill-opacity="0.19"/><circle cx="902" cy="256" r="1.6" fill="#c9a0e8" fill-opacity="0.07"/><circle cx="700" cy="169" r="1.2" fill="#c9a0e8" fill-opacity="0.22"/><circle cx="786" cy="156" r="1" fill="#c9a0e8" fill-opacity="0.20"/><circle cx="335" cy="504" r="0.8" fill="#8fb0f0" fill-opacity="0.09"/><circle cx="116" cy="36" r="2.2" fill="#c9a0e8" fill-opacity="0.06"/><circle cx="706" cy="216" r="2.2" fill="#c9a0e8" fill-opacity="0.07"/><circle cx="163" cy="218" r="0.8" fill="#c9a0e8" fill-opacity="0.20"/><circle cx="783" cy="463" r="0.8" fill="#8fb0f0" fill-opacity="0.17"/><circle cx="942" cy="367" r="1" fill="#8fb0f0" fill-opacity="0.21"/><circle cx="148" cy="98" r="0.7" fill="#c9a0e8" fill-opacity="0.17"/><circle cx="16" cy="445" r="0.7" fill="#8fb0f0" fill-opacity="0.10"/><circle cx="9" cy="227" r="0.8" fill="#c9a0e8" fill-opacity="0.16"/><circle cx="308" cy="72" r="2.2" fill="#c9a0e8" fill-opacity="0.08"/><circle cx="592" cy="363" r="0.6" fill="#8fb0f0" fill-opacity="0.13"/><circle cx="832" cy="509" r="1.6" fill="#8fb0f0" fill-opacity="0.19"/><circle cx="378" cy="216" r="0.6" fill="#c9a0e8" fill-opacity="0.14"/><circle cx="385" cy="106" r="0.7" fill="#c9a0e8" fill-opacity="0.13"/><circle cx="109" cy="323" r="0.6" fill="#8fb0f0" fill-opacity="0.06"/><circle cx="149" cy="59" r="0.8" fill="#c9a0e8" fill-opacity="0.16"/><circle cx="72" cy="115" r="1" fill="#c9a0e8" fill-opacity="0.08"/><circle cx="245" cy="189" r="0.8" fill="#c9a0e8" fill-opacity="0.14"/><circle cx="115" cy="264" r="1" fill="#c9a0e8" fill-opacity="0.14"/><circle cx="301" cy="81" r="1.6" fill="#c9a0e8" fill-opacity="0.11"/><circle cx="257" cy="444" r="0.7" fill="#8fb0f0" fill-opacity="0.14"/><circle cx="200" cy="510" r="0.8" fill="#8fb0f0" fill-opacity="0.08"/><circle cx="521" cy="19" r="1.2" fill="#c9a0e8" fill-opacity="0.11"/><circle cx="616" cy="53" r="2.2" fill="#c9a0e8" fill-opacity="0.06"/><circle cx="353" cy="94" r="2.2" fill="#c9a0e8" fill-opacity="0.06"/><circle cx="519" cy="271" r="1.6" fill="#8fb0f0" fill-opacity="0.10"/><circle cx="776" cy="527" r="2.2" fill="#8fb0f0" fill-opacity="0.06"/><circle cx="232" cy="217" r="2.2" fill="#c9a0e8" fill-opacity="0.06"/><circle cx="497" cy="193" r="0.6" fill="#c9a0e8" fill-opacity="0.22"/><circle cx="756" cy="255" r="0.7" fill="#c9a0e8" fill-opacity="0.17"/><circle cx="914" cy="242" r="1.6" fill="#c9a0e8" fill-opacity="0.22"/><circle cx="912" cy="198" r="0.7" fill="#c9a0e8" fill-opacity="0.08"/><circle cx="452" cy="184" r="1" fill="#c9a0e8" fill-opacity="0.16"/><circle cx="860" cy="450" r="1" fill="#8fb0f0" fill-opacity="0.21"/><circle cx="332" cy="346" r="2.2" fill="#8fb0f0" fill-opacity="0.08"/><circle cx="869" cy="420" r="2.2" fill="#8fb0f0" fill-opacity="0.06"/><circle cx="850" cy="235" r="1.6" fill="#c9a0e8" fill-opacity="0.11"/><circle cx="766" cy="520" r="1" fill="#8fb0f0" fill-opacity="0.13"/><circle cx="711" cy="50" r="0.7" fill="#c9a0e8" fill-opacity="0.09"/><circle cx="126" cy="85" r="1" fill="#c9a0e8" fill-opacity="0.19"/><circle cx="144" cy="443" r="1" fill="#8fb0f0" fill-opacity="0.17"/><circle cx="338" cy="296" r="0.7" fill="#8fb0f0" fill-opacity="0.06"/><circle cx="764" cy="390" r="0.6" fill="#8fb0f0" fill-opacity="0.14"/><circle cx="892" cy="235" r="2.2" fill="#c9a0e8" fill-opacity="0.06"/><circle cx="835" cy="20" r="0.7" fill="#c9a0e8" fill-opacity="0.11"/><circle cx="234" cy="316" r="0.8" fill="#8fb0f0" fill-opacity="0.15"/><circle cx="797" cy="37" r="1.6" fill="#c9a0e8" fill-opacity="0.12"/><circle cx="440" cy="314" r="1.2" fill="#8fb0f0" fill-opacity="0.13"/><circle cx="877" cy="271" r="1.2" fill="#8fb0f0" fill-opacity="0.08"/><circle cx="490" cy="468" r="2.2" fill="#8fb0f0" fill-opacity="0.06"/><circle cx="9" cy="429" r="0.7" fill="#8fb0f0" fill-opacity="0.08"/><circle cx="593" cy="69" r="0.6" fill="#c9a0e8" fill-opacity="0.11"/><circle cx="497" cy="299" r="2.2" fill="#8fb0f0" fill-opacity="0.09"/><circle cx="844" cy="35" r="0.7" fill="#c9a0e8" fill-opacity="0.10"/><circle cx="739" cy="274" r="1.2" fill="#8fb0f0" fill-opacity="0.06"/><circle cx="854" cy="39" r="0.8" fill="#c9a0e8" fill-opacity="0.16"/><circle cx="485" cy="276" r="1.6" fill="#8fb0f0" fill-opacity="0.10"/><circle cx="488" cy="433" r="1.2" fill="#8fb0f0" fill-opacity="0.21"/><circle cx="669" cy="470" r="0.8" fill="#8fb0f0" fill-opacity="0.21"/><circle cx="853" cy="112" r="1" fill="#c9a0e8" fill-opacity="0.08"/><circle cx="121" cy="239" r="0.6" fill="#c9a0e8" fill-opacity="0.17"/><circle cx="412" cy="118" r="0.8" fill="#c9a0e8" fill-opacity="0.19"/><circle cx="857" cy="87" r="1.6" fill="#c9a0e8" fill-opacity="0.16"/><circle cx="353" cy="139" r="0.7" fill="#c9a0e8" fill-opacity="0.21"/><circle cx="214" cy="510" r="1" fill="#8fb0f0" fill-opacity="0.20"/><circle cx="160" cy="359" r="0.7" fill="#8fb0f0" fill-opacity="0.09"/><circle cx="415" cy="278" r="0.8" fill="#8fb0f0" fill-opacity="0.13"/><circle cx="344" cy="54" r="0.8" fill="#c9a0e8" fill-opacity="0.06"/></g>
<!-- top-right dial, centre (917,105) -->
<g fill="none" stroke="#b99ae2">
<circle cx="917" cy="105" r="30" stroke="#c8b0ea" stroke-opacity=".8" stroke-width="1.500" stroke-dasharray="144 44.500" transform="rotate(15.700 917 105)"/>
<circle cx="917" cy="105" r="37.500" stroke-opacity=".35" stroke-width=".8" stroke-dasharray="95 141" transform="rotate(20 917 105)"/>
<circle cx="917" cy="105" r="63.300" stroke-opacity=".4" stroke-width=".9"/>
<circle cx="917" cy="105" r="104" stroke-opacity=".2" stroke-width="8" stroke-dasharray=".8 2.200"/>
<circle cx="917" cy="105" r="108" stroke-opacity=".55" stroke-width="1"/>
<circle cx="917" cy="105" r="129.400" stroke-opacity=".5" stroke-width="1" stroke-dasharray="560 253" transform="rotate(108 917 105)"/>
<circle cx="917" cy="105" r="147" stroke-opacity=".16" stroke-width="7" stroke-dasharray=".8 3.200"/>
<path d="M720 12L893 234" stroke-opacity=".25" stroke-width=".8" stroke-dasharray="2 2.500"/>
<path d="M790 115L835 170" stroke-opacity=".2" stroke-width=".8" stroke-dasharray="2 2.500"/>
<path d="M817 43l5-7 5 5" stroke-opacity=".6" stroke-width="1.200"/>
</g>
<!-- lower-right, centre (908,386) -->
<g fill="none" stroke="#86a0dc">
<path d="M944.400 389.200A36.500 36.500 0 1 0 904.800 422.400" stroke-opacity=".85" stroke-width="1.700"/>
<path d="M878.700 388.600A29.400 29.400 0 1 1 913.100 415" stroke-opacity=".8" stroke-width="1.700"/>
<path d="M892 335A53.700 53.700 0 1 0 958 405" stroke-opacity=".5" stroke-width="1" stroke-dasharray="4 3"/>
<path d="M856 326A78.800 78.800 0 1 0 975 430" stroke-opacity=".45" stroke-width="1" stroke-dasharray="1.500 2.500"/>
<path d="M918 444l3 4 3-4" stroke-opacity=".6" stroke-width="1"/>
</g>
<path d="M851 330l10-9-3 11-2.500-3.500z" fill="#86a0dc" fill-opacity=".6"/>
<g stroke="#9fb4e8" stroke-opacity=".3" stroke-width=".8"><path d="M909 286v11M914 286v11M919 286v11M924 286v11M929 286v11M934 288l-2 10M939 290l-3 10"/></g>
<!-- bottom-left, centre (30,520) -->
<g fill="none" stroke="#7f8fd8">
<circle cx="30" cy="520" r="62" stroke-opacity=".5" stroke-width="1.100"/>
<circle cx="30" cy="520" r="49" stroke-opacity=".7" stroke-width="1.800"/>
<path d="M38 434.400A86 86 0 0 1 116 520" stroke-opacity=".45" stroke-width="1.200" stroke-dasharray="1.500 3"/>
<path d="M88 471l4 1-2 4" stroke-opacity=".5" stroke-width="1"/>
</g>
<path d="M34 436l7-3.500-1.500 3.500 1.500 3.500z" fill="#8a98dc" fill-opacity=".6"/>
<!-- top-centre arcs, centre (333,5) -->
<g fill="none" stroke="#a060c0">
<circle cx="333" cy="5" r="32" stroke-opacity=".5" stroke-width="1"/>
<path d="M306.700 5A26.300 26.300 0 0 0 345 28.400" stroke-opacity=".7" stroke-width="1.200"/>
</g>
<circle cx="68.500" cy="192.300" r="4.800" fill="#fff"/><circle cx="68.500" cy="359" r="4.800" fill="#fff"/>
</svg>
</div>

<!-- status bar -->
<div class="a" style="left:259px;top:959px;width:1021px;height:1px;background:#cdcdcd"></div>
<div class="a" style="left:0;top:962px;width:1280px;height:22px;background:#f3f3f3;border-top:1px solid #c9c9c9"></div>
<svg style="left:98px;top:966px" width="14" height="13" viewBox="0 0 14 13"><path d="M6.500 1.500v10M0.500 1.500h6v10h-6zM6.500 1.500h6v4M8 8l1.500 1.500 3-3.500M6.500 11.500h3" fill="none" stroke="#666" stroke-width="1"/></svg>
<svg style="left:749px;top:967px" width="12" height="12" viewBox="0 0 12 12"><path d="M3.500 3.500l2.500-3 2.500 3z" fill="#555"/><path d="M0 5.500h12M0 8.500h12M0 11.500h8" stroke="#555" stroke-width="1"/></svg>
<svg style="left:829px;top:966px" width="14" height="13" viewBox="0 0 14 13"><path d="M1.500 0h11a1.500 1.500 0 0 1 1.500 1.500v6a1.500 1.500 0 0 1-1.500 1.500H7l-3.500 4v-4h-2A1.500 1.500 0 0 1 0 7.500v-6A1.500 1.500 0 0 1 1.500 0z" fill="#595959"/></svg>
<div class="a" style="left:934px;top:963px;width:38px;height:21px;background:#c8c8c8"></div>
<svg style="left:946px;top:966px" width="14" height="13" viewBox="0 0 14 13"><path d="M0.500 0.500h13v11.500h-13zM3.500 0.500v11.500M3.500 8.500h10" fill="none" stroke="#666" stroke-width="1"/><rect x="6.500" y="3" width="4.500" height="3" fill="none" stroke="#666"/></svg>
<svg style="left:984px;top:966px" width="15" height="13" viewBox="0 0 15 13"><path d="M0.500 0.500h5v4h-5zM8.500 0.500h5v4h-5zM0.500 8h5v4h-5zM8.500 8h5v4h-5z" fill="none" stroke="#666" stroke-width="1"/></svg>
<svg style="left:1022px;top:966px" width="13" height="13" viewBox="0 0 13 13"><path d="M6.500 1.500v11M6.500 1.500c-2-1.200-4-1.200-6-.5v9.500c2-.7 4-.7 6 .5c2-1.200 4-1.200 6-.5V1c-2-.7-4-.7-6 .5z" fill="none" stroke="#666" stroke-width="1"/><path d="M2 3.500h3M2 5.500h3M2 7.500h3M8 3.500h3M8 5.500h3M8 7.500h3" stroke="#777" stroke-width=".8"/></svg>
<svg style="left:1060px;top:966px" width="13" height="13" viewBox="0 0 13 13"><path d="M0 0.500h13M1.500 1v6.500h10V1M6.500 7.500v4M3.500 12h6" fill="none" stroke="#666" stroke-width="1.100"/></svg>
<div class="a" style="left:1091px;top:972px;width:6px;height:2px;background:#555"></div>
<div class="a" style="left:1101px;top:973px;width:100px;height:1px;background:#9a9a9a"></div>
<div class="a" style="left:1151px;top:970px;width:1px;height:7px;background:#9a9a9a"></div>
<div class="a" style="left:1136px;top:967px;width:5px;height:11px;background:#6a6a6a"></div>
<div class="a" style="left:1204px;top:972px;width:7px;height:2px;background:#555"></div>
<div class="a" style="left:1206.500px;top:969.500px;width:2px;height:7px;background:#555"></div>
<svg style="left:1260px;top:966px" width="14" height="13" viewBox="0 0 14 13"><rect x="0.500" y="0.500" width="13" height="12" fill="none" stroke="#666"/><path d="M7 2v3M7 8v3M2.500 6.500h3M8.500 6.500h3M5.800 3.200 7 2l1.200 1.200M5.800 9.800 7 11l1.200-1.200M3.700 5.300 2.500 6.500l1.200 1.200M10.300 5.300l1.200 1.200-1.200 1.200" fill="none" stroke="#666" stroke-width=".9"/></svg>

<!-- taskbar -->
<div class="a" style="left:0;top:984px;width:1280px;height:40px;background:linear-gradient(90deg,#11130f 0%,#120f0b 45%,#1b140c 75%,#2a1c0e 100%)"></div>
<svg style="left:16px;top:996px" width="17" height="17" viewBox="0 0 17 17"><path d="M0 2.300 7 1.300v6.700H0zM8 1.150 17 0v8H8zM0 9h7v6.700L0 14.700zM8 9h9v8L8 15.850z" fill="#fff"/></svg>
<svg style="left:64px;top:996px" width="17" height="17" viewBox="0 0 17 17"><circle cx="10.500" cy="6.500" r="5.500" fill="none" stroke="#fff" stroke-width="1.500"/><path d="M6.500 10.500 0.700 16.300" stroke="#fff" stroke-width="1.600"/></svg>
<svg style="left:111px;top:995px" width="19" height="18" viewBox="0 0 19 18"><path d="M0.700 0v3M0.700 15v3M12.300 0v3M12.300 15v3" stroke="#fff" stroke-width="1.400"/><rect x="0.700" y="5" width="11.600" height="8" fill="none" stroke="#fff" stroke-width="1.400"/><path d="M16.500 0v3.500M16.500 6v6M16.500 14.500v3.500" stroke="#fff" stroke-width="1.600"/></svg>
<svg style="left:164px;top:992px" width="24" height="24" viewBox="0 0 24 24"><defs><linearGradient id="al" x1="0" y1="1" x2="1" y2="0"><stop offset="0" stop-color="#c44bf0"/><stop offset="1" stop-color="#6a5cf6"/></linearGradient></defs><circle cx="12" cy="12" r="12" fill="url(#al)"/><path d="M12 7.200c.9 0 1.500.5 2.200 1.600l3.300 5.200c1 1.700.3 3-1.600 3.200-2.600.3-5.200.3-7.800 0-1.900-.2-2.600-1.500-1.600-3.200l3.300-5.200c.7-1.100 1.300-1.600 2.200-1.600z" fill="#fff"/></svg>
<svg style="left:220px;top:993px" width="26" height="20" viewBox="0 0 26 20"><path d="M0.500 7 13 0.500 25.500 7v12.500h-25z" fill="#fff"/><path d="M2 8.500l13 4.500-6 1 9 3.500-3-4 8.500-6z" fill="#14140f"/></svg>
<svg style="left:270px;top:992px" width="24" height="24" viewBox="0 0 24 24"><circle cx="12" cy="12" r="11.500" fill="#dd4a3a"/><path d="M12 12 1.800 6.500A11.500 11.500 0 0 0 10 23.300z" fill="#2ba24c"/><path d="M12 12l-2 11.300A11.500 11.500 0 0 0 23.300 9H12z" fill="#fbc116"/><path d="M12 12 1.800 6.600A11.500 11.500 0 0 1 23.200 9H12z" fill="#dd4a3a"/><circle cx="12" cy="12" r="5.300" fill="#fff"/><circle cx="12" cy="12" r="4.200" fill="#4a8af4"/></svg>
<div class="a" style="left:262px;top:1021px;width:40px;height:3px;background:#8cc3ee"></div>
<svg style="left:319px;top:991px" width="24" height="25" viewBox="0 0 24 25"><path d="M7 2l13 2.500-3 18L2 19z" fill="#dff0f6"/><path d="M7 2l13 2.500-1 4L6 6z" fill="#9fc8d8"/><path d="M2 19l3-13 12 3-2 13.500z" fill="#6fb2cc" opacity=".75"/><path d="M4 17l2.500-10 9 2z" fill="#cfe8f2" opacity=".7"/></svg>
<div class="a" style="left:356px;top:984px;width:48px;height:40px;background:#a75c20"></div>
<div class="a" style="left:356px;top:1021px;width:48px;height:3px;background:#f58a1a"></div>
<svg style="left:368px;top:992px" width="25" height="25" viewBox="0 0 25 25"><defs><radialGradient id="bb" cx=".4" cy=".35" r=".7"><stop offset="0" stop-color="#b8e6ff"/><stop offset=".55" stop-color="#3aa0e8"/><stop offset="1" stop-color="#1a62b8"/></radialGradient></defs><circle cx="12.500" cy="12.500" r="12" fill="url(#bb)"/><ellipse cx="12" cy="9" rx="5.500" ry="5" fill="#8a3a5a"/><ellipse cx="11" cy="8.500" rx="3" ry="3" fill="#c85a3a"/><path d="M3 15c4 5 13 6 19-2-2 7-8 10.500-13 9-3-1-5.500-4-6-7z" fill="#d6f0ff" opacity=".75"/></svg>
<div class="a" style="left:405px;top:984px;width:48px;height:40px;background:#3b3a37"></div>
<div class="a" style="left:405px;top:1021px;width:48px;height:3px;background:#8cc3ee"></div>
<svg style="left:417px;top:992px" width="24" height="23" viewBox="0 0 24 23"><rect x="11" y="3.500" width="12" height="16" fill="#fbe9e4"/><circle cx="17.500" cy="9" r="3.300" fill="#d24726"/><path d="M17.500 9V5.200a3.800 3.800 0 0 1 3.800 3.800z" fill="#fbe9e4"/><path d="M13.500 14.500h8M13.500 16.800h8" stroke="#d24726" stroke-width="1.300"/><path d="M0 2.500 14 0v23L0 20.500z" fill="#d24726"/><text x="3.200" y="16.500" font-family="Liberation Sans, sans-serif" font-weight="700" font-size="12.500" fill="#fff">P</text></svg>
<div class="a" style="left:1275px;top:984px;width:1px;height:40px;background:#8a8278"></div>
<!-- tray -->
<svg style="left:1022px;top:996px" width="15" height="16" viewBox="0 0 15 16"><circle cx="10" cy="3.600" r="2.900" fill="none" stroke="#fff" stroke-width="1.200"/><path d="M5.500 10.500c.5-2.500 2.500-3.800 4.500-3.800s4 1.300 4.500 3.800" fill="none" stroke="#fff" stroke-width="1.200"/><circle cx="4.600" cy="8.600" r="2.500" fill="#15130f" stroke="#fff" stroke-width="1.200"/><path d="M0.600 15.500c.3-2.500 2-3.900 4-3.900s3.700 1.400 4 3.900" fill="none" stroke="#fff" stroke-width="1.200"/></svg>
<svg style="left:1058px;top:1000px" width="14" height="8" viewBox="0 0 14 8"><path d="M0.700 7.300 7 1l6.300 6.300" fill="none" stroke="#fff" stroke-width="1.300"/></svg>
<svg style="left:1083px;top:998px" width="15" height="14" viewBox="0 0 15 14"><g fill="none" stroke="#fff" stroke-width="1.200"><path d="M1 13A12 12 0 0 1 13 1" stroke-opacity=".55"/><path d="M4.500 13A8.500 8.500 0 0 1 13 4.500"/><path d="M8 13a5 5 0 0 1 5-5"/></g><circle cx="12" cy="12" r="1.600" fill="#fff"/></svg>
<svg style="left:1105px;top:997px" width="17" height="15" viewBox="0 0 17 15"><path d="M0.600 5h3l4-3.800v12.600l-4-3.800h-3z" fill="none" stroke="#fff" stroke-width="1.100"/><path d="M10 4.500a4 4 0 0 1 0 6M12.300 2.500a7 7 0 0 1 0 10M14.600 0.700a9.600 9.600 0 0 1 0 13.600" fill="none" stroke="#fff" stroke-width="1.100"/></svg>
<svg style="left:1239px;top:996px" width="17" height="16" viewBox="0 0 17 16"><path d="M0 0h16v12H5l-4.500 4v-4H0z" fill="#fff"/><path d="M3 3.500h10M3 6h10M3 8.500h7" stroke="#221810" stroke-width="1"/></svg>
<div class="a" style="left:1246px;top:1003px;width:17px;height:17px;border-radius:50%;background:#3a3632;border:1.500px solid #1c150e"></div>

<!-- labels -->
<span class="t" style="left:576.02px;top:8.67px;font-size:12.5px;line-height:15px;color:#ffffff;transform:scaleX(0.9832);transform-origin:0 0;">Пушкин  -  PowerPoint</span>
<span class="t" style="left:1050.30px;top:9.34px;font-size:12px;line-height:14px;color:#4a3a36;transform:scaleX(0.9284);transform-origin:0 0;">Вход</span>
<span class="t" style="left:15.00px;top:42.24px;font-size:12px;line-height:14px;color:#ffffff;transform:scaleX(0.9661);transform-origin:0 0;">Файл</span>
<span class="t" style="left:144.50px;top:42.24px;font-size:12px;line-height:14px;color:#ffffff;transform:scaleX(0.9126);transform-origin:0 0;">Вставка</span>
<span class="t" style="left:213.00px;top:42.24px;font-size:12px;line-height:14px;color:#ffffff;transform:scaleX(1.0182);transform-origin:0 0;">Конструктор</span>
<span class="t" style="left:310.00px;top:42.24px;font-size:12px;line-height:14px;color:#ffffff;transform:scaleX(0.9881);transform-origin:0 0;">Переходы</span>
<span class="t" style="left:392.00px;top:42.24px;font-size:12px;line-height:14px;color:#ffffff;transform:scaleX(1.0209);transform-origin:0 0;">Анимация</span>
<span class="t" style="left:476.00px;top:42.24px;font-size:12px;line-height:14px;color:#ffffff;transform:scaleX(1.0127);transform-origin:0 0;">Слайд-шоу</span>
<span class="t" style="left:566.00px;top:42.24px;font-size:12px;line-height:14px;color:#ffffff;transform:scaleX(0.9786);transform-origin:0 0;">Рецензирование</span>
<span class="t" style="left:684.00px;top:42.24px;font-size:12px;line-height:14px;color:#ffffff;transform:scaleX(0.9214);transform-origin:0 0;">Вид</span>
<span class="t" style="left:731.00px;top:42.24px;font-size:12px;line-height:14px;color:#ffffff;transform:scaleX(0.9705);transform-origin:0 0;">Справка</span>
<span class="t" style="left:832.00px;top:42.24px;font-size:12px;line-height:14px;color:#ffffff;transform:scaleX(0.9475);transform-origin:0 0;">Что вы хотите сделать?</span>
<span class="t" style="left:1175.00px;top:42.24px;font-size:12px;line-height:14px;color:#ffffff;transform:scaleX(1.0109);transform-origin:0 0;">Общий доступ</span>
<span class="t" style="left:73.50px;top:42.24px;font-size:12px;line-height:14px;color:#7a4a42;transform:scaleX(0.9518);transform-origin:0 0;">Главная</span>
<span class="t" style="left:5.00px;top:140.64px;font-size:12px;line-height:14px;color:#3b3b3b;transform:scaleX(0.9406);transform-origin:0 0;">Буфер обмена</span>
<span class="t" style="left:156.00px;top:140.64px;font-size:12px;line-height:14px;color:#3b3b3b;transform:scaleX(0.9081);transform-origin:0 0;">Слайды</span>
<span class="t" style="left:356.00px;top:140.64px;font-size:12px;line-height:14px;color:#3b3b3b;transform:scaleX(0.9754);transform-origin:0 0;">Шрифт</span>
<span class="t" style="left:594.00px;top:140.64px;font-size:12px;line-height:14px;color:#3b3b3b;transform:scaleX(0.9471);transform-origin:0 0;">Абзац</span>
<span class="t" style="left:850.00px;top:140.64px;font-size:12px;line-height:14px;color:#3b3b3b;transform:scaleX(0.9381);transform-origin:0 0;">Рисование</span>
<span class="t" style="left:1066.50px;top:140.64px;font-size:12px;line-height:14px;color:#3b3b3b;transform:scaleX(0.9484);transform-origin:0 0;">Редактирование</span>
<span class="t" style="left:10.00px;top:105.84px;font-size:12px;line-height:14px;color:#262626;transform:scaleX(0.9484);transform-origin:0 0;">Вставить</span>
<span class="t" style="left:115.00px;top:105.84px;font-size:12px;line-height:14px;color:#262626;transform:scaleX(0.9261);transform-origin:0 0;">Создать</span>
<span class="t" style="left:117.00px;top:121.84px;font-size:12px;line-height:14px;color:#262626;transform:scaleX(0.9287);transform-origin:0 0;">слайд</span>
<span class="t" style="left:182.00px;top:71.84px;font-size:12px;line-height:14px;color:#262626;transform:scaleX(0.9575);transform-origin:0 0;">Макет</span>
<span class="t" style="left:182.00px;top:94.84px;font-size:12px;line-height:14px;color:#262626;">Сбросить</span>
<span class="t" style="left:182.00px;top:117.84px;font-size:12px;line-height:14px;color:#262626;transform:scaleX(0.9077);transform-origin:0 0;">Раздел</span>
<span class="t" style="left:393.80px;top:79.84px;font-size:12px;line-height:14px;color:#a0a0a0;transform:scaleX(0.8630);transform-origin:0 0;">18</span>
<span class="t" style="left:442.00px;top:78.80px;font-size:15px;line-height:18px;color:#b0b0b0;">A</span>
<span class="t" style="left:465.00px;top:81.17px;font-size:12.5px;line-height:15px;color:#b0b0b0;transform:scaleX(0.8889);transform-origin:0 0;">A</span>
<span class="t" style="left:498.00px;top:79.38px;font-size:9px;line-height:11px;color:#b8b8b8;">A</span>
<span class="t" style="left:263.92px;top:110.17px;font-size:12.5px;line-height:15px;color:#a8a8a8;transform:scaleX(0.9231);transform-origin:0 0;font-weight:700;">Ж</span>
<span class="t" style="left:286.00px;top:110.17px;font-size:12.5px;line-height:15px;color:#a8a8a8;transform:scaleX(0.8889);transform-origin:0 0;font-weight:700;font-style:italic;">К</span>
<span class="t" style="left:308.00px;top:109.17px;font-size:12.5px;line-height:15px;color:#a8a8a8;transform:scaleX(1.2500);transform-origin:0 0;">Ч</span>
<span class="t" style="left:331.00px;top:109.50px;font-size:13px;line-height:16px;color:#a8a8a8;font-weight:700;text-shadow:1px 1px 1px #ccc;">S</span>
<span class="t" style="left:349.00px;top:111.69px;font-size:11px;line-height:13px;color:#b0b0b0;transform:scaleX(0.9323);transform-origin:0 0;">abc</span>
<span class="t" style="left:372.00px;top:109.69px;font-size:11px;line-height:13px;color:#b0b0b0;transform:scaleX(1.0330);transform-origin:0 0;">AV</span>
<span class="t" style="left:404.00px;top:109.50px;font-size:13px;line-height:16px;color:#b0b0b0;transform:scaleX(0.9598);transform-origin:0 0;">Aa</span>
<span class="t" style="left:448.00px;top:110.23px;font-size:8px;line-height:10px;color:#b0b0b0;transform:scaleX(0.9525);transform-origin:0 0;">ab</span>
<span class="t" style="left:484.00px;top:108.80px;font-size:15px;line-height:18px;color:#b0b0b0;">A</span>
<span class="t" style="left:565.00px;top:78.59px;font-size:5.5px;line-height:7px;color:#aaa;">1</span>
<span class="t" style="left:565.00px;top:83.59px;font-size:5.5px;line-height:7px;color:#aaa;">2</span>
<span class="t" style="left:565.00px;top:88.59px;font-size:5.5px;line-height:7px;color:#aaa;">3</span>
<span class="t" style="left:689.00px;top:70.38px;font-size:9px;line-height:11px;color:#b4b4b4;transform:scaleX(1.1667);transform-origin:0 0;">A</span>
<span class="t" style="left:729.00px;top:105.84px;font-size:12px;line-height:14px;color:#262626;transform:scaleX(1.0309);transform-origin:0 0;">Фигуры</span>
<span class="t" style="left:777.00px;top:105.84px;font-size:12px;line-height:14px;color:#262626;transform:scaleX(1.0119);transform-origin:0 0;">Упорядочить</span>
<span class="t" style="left:853.00px;top:105.84px;font-size:12px;line-height:14px;color:#a6a6a6;">Экспресс-</span>
<span class="t" style="left:862.00px;top:121.84px;font-size:12px;line-height:14px;color:#a6a6a6;transform:scaleX(1.0256);transform-origin:0 0;">стили</span>
<span class="t" style="left:935.00px;top:71.84px;font-size:12px;line-height:14px;color:#a6a6a6;transform:scaleX(0.9888);transform-origin:0 0;">Заливка фигуры</span>
<span class="t" style="left:935.00px;top:94.84px;font-size:12px;line-height:14px;color:#a6a6a6;transform:scaleX(1.0086);transform-origin:0 0;">Контур фигуры</span>
<span class="t" style="left:935.00px;top:117.84px;font-size:12px;line-height:14px;color:#a6a6a6;transform:scaleX(0.9761);transform-origin:0 0;">Эффекты фигуры</span>
<span class="t" style="left:1085.50px;top:71.84px;font-size:12px;line-height:14px;color:#262626;transform:scaleX(0.9839);transform-origin:0 0;">Найти</span>
<span class="t" style="left:1085.00px;top:94.84px;font-size:12px;line-height:14px;color:#262626;transform:scaleX(0.9875);transform-origin:0 0;">Заменить</span>
<span class="t" style="left:1085.00px;top:117.84px;font-size:12px;line-height:14px;color:#262626;transform:scaleX(0.9618);transform-origin:0 0;">Выделить</span>
<span class="t" style="left:1066.00px;top:90.49px;font-size:11px;line-height:13px;color:#8a4aa8;transform:scaleX(0.9903);transform-origin:0 0;">ab</span>
<span class="t" style="left:1071.00px;top:98.29px;font-size:11px;line-height:13px;color:#3a6ea5;transform:scaleX(0.9078);transform-origin:0 0;">ac</span>
<span class="t" style="left:11.90px;top:171.70px;font-size:15.3px;line-height:18px;color:#4a4a4a;transform:scaleX(0.9000);transform-origin:0 0;">4</span>
<span class="t" style="left:11.90px;top:296.70px;font-size:15.3px;line-height:18px;color:#4a4a4a;transform:scaleX(1.0125);transform-origin:0 0;">5</span>
<span class="t" style="left:11.90px;top:421.70px;font-size:15.3px;line-height:18px;color:#4a4a4a;transform:scaleX(1.0125);transform-origin:0 0;">6</span>
<span class="t" style="left:11.90px;top:546.70px;font-size:15.3px;line-height:18px;color:#4a4a4a;transform:scaleX(1.0125);transform-origin:0 0;">7</span>
<span class="t" style="left:11.90px;top:671.70px;font-size:15.3px;line-height:18px;color:#c8512f;transform:scaleX(1.0125);transform-origin:0 0;">8</span>
<span class="t" style="left:11.90px;top:796.70px;font-size:15.3px;line-height:18px;color:#4a4a4a;transform:scaleX(1.0125);transform-origin:0 0;">9</span>
<span class="t" style="left:3.80px;top:921.50px;font-size:15.3px;line-height:18px;color:#4a4a4a;">10</span>
<span class="t" style="left:117.00px;top:877.84px;font-size:12px;line-height:14px;color:#555;transform:scaleX(0.9298);transform-origin:0 0;z-index:6;">Осень 1830 года. «Болдинская...</span>
<span class="t" style="left:47.50px;top:194.35px;font-size:6.2px;line-height:7px;color:#f3e6f5;transform:scaleX(0.9498);transform-origin:0 0;">КОНЕЦ ИЮЛЯ 1827 ГОДА.</span>
<span class="t" style="left:52.00px;top:217.22px;font-size:6px;line-height:7px;color:#f3e6f5;transform:scaleX(0.9556);transform-origin:0 0;font-weight:700;">Пробыв два месяца в столице, он едет в</span>
<span class="t" style="left:52.00px;top:225.42px;font-size:6px;line-height:7px;color:#f3e6f5;transform:scaleX(0.9431);transform-origin:0 0;font-weight:700;">Михайловское, чтобы уединиться и</span>
<span class="t" style="left:52.00px;top:233.62px;font-size:6px;line-height:7px;color:#f3e6f5;transform:scaleX(0.9680);transform-origin:0 0;font-weight:700;">продолжить работу над произведениями</span>
<span class="t" style="left:52.00px;top:241.82px;font-size:6px;line-height:7px;color:#f3e6f5;transform:scaleX(0.9606);transform-origin:0 0;font-weight:700;">(начал роман «Арап Петра Великого», работал</span>
<span class="t" style="left:52.00px;top:250.02px;font-size:6px;line-height:7px;color:#f3e6f5;transform:scaleX(0.9896);transform-origin:0 0;font-weight:700;">над романом «Евгений Онегин»)</span>
<span class="t" style="left:48.00px;top:217.22px;font-size:6px;line-height:7px;color:#f3e6f5;">•</span>
<span class="t" style="left:47.50px;top:440.35px;font-size:6.2px;line-height:7px;color:#f3e6f5;transform:scaleX(0.9380);transform-origin:0 0;">ДЕКАБРЬ 1828 ГОДА. ЗНАКОМСТВО С НАТАЛЬЕЙ</span>
<span class="t" style="left:47.50px;top:447.85px;font-size:6.2px;line-height:7px;color:#f3e6f5;transform:scaleX(0.9389);transform-origin:0 0;">ГОНЧАРОВОЙ</span>
<span class="t" style="left:45.00px;top:461.61px;font-size:4px;line-height:5px;color:#f3e6f5;transform:scaleX(0.9377);transform-origin:0 0;font-weight:700;">Здесь на одном из светских</span>
<span class="t" style="left:45.00px;top:467.11px;font-size:4px;line-height:5px;color:#f3e6f5;transform:scaleX(0.9564);transform-origin:0 0;font-weight:700;">мероприятий он знакомится с</span>
<span class="t" style="left:45.00px;top:472.81px;font-size:4px;line-height:5px;color:#f3e6f5;transform:scaleX(0.9508);transform-origin:0 0;font-weight:700;">Натальей Гончаровой, в которую, как</span>
<span class="t" style="left:45.00px;top:478.41px;font-size:4px;line-height:5px;color:#f3e6f5;transform:scaleX(0.9437);transform-origin:0 0;font-weight:700;">признавался сам Пушкин, он</span>
<span class="t" style="left:45.00px;top:484.11px;font-size:4px;line-height:5px;color:#f3e6f5;transform:scaleX(0.9404);transform-origin:0 0;font-weight:700;">влюбился с первого взгляда.</span>
<span class="t" style="left:45.00px;top:491.41px;font-size:4px;line-height:5px;color:#f3e6f5;transform:scaleX(0.9720);transform-origin:0 0;font-weight:700;">Пушкин почти сразу попросил ее</span>
<span class="t" style="left:45.00px;top:497.11px;font-size:4px;line-height:5px;color:#f3e6f5;transform:scaleX(0.9471);transform-origin:0 0;font-weight:700;">руки у родителей Натальи, но они</span>
<span class="t" style="left:45.00px;top:502.81px;font-size:4px;line-height:5px;color:#f3e6f5;transform:scaleX(0.9374);transform-origin:0 0;font-weight:700;">отказали, сославшись на молодость</span>
<span class="t" style="left:45.00px;top:508.41px;font-size:4px;line-height:5px;color:#f3e6f5;transform:scaleX(0.9472);transform-origin:0 0;font-weight:700;">дочери (ей на тот момент было всего</span>
<span class="t" style="left:45.00px;top:514.11px;font-size:4px;line-height:5px;color:#f3e6f5;transform:scaleX(0.9635);transform-origin:0 0;font-weight:700;">16 лет), но и твердого отказа не дали.</span>
<span class="t" style="left:41.00px;top:461.61px;font-size:4px;line-height:5px;color:#f3e6f5;">•</span>
<span class="t" style="left:41.00px;top:491.41px;font-size:4px;line-height:5px;color:#f3e6f5;">•</span>
<span class="t" style="left:48.00px;top:565.35px;font-size:6.2px;line-height:7px;color:#f3e6f5;transform:scaleX(0.9442);transform-origin:0 0;">НОЯБРЬ 1829 ГОДА — МАРТ 1830.  ПОЕЗДКА В</span>
<span class="t" style="left:48.00px;top:572.95px;font-size:6.2px;line-height:7px;color:#f3e6f5;transform:scaleX(0.8607);transform-origin:0 0;">ПЕТЕРБУРГ.</span>
<span class="t" style="left:52.00px;top:584.61px;font-size:4.6px;line-height:6px;color:#f3e6f5;transform:scaleX(0.9693);transform-origin:0 0;font-weight:700;">В Ноябре поэт снова прибыл в столицу, где живет до марта</span>
<span class="t" style="left:52.00px;top:591.71px;font-size:4.6px;line-height:6px;color:#f3e6f5;transform:scaleX(0.9743);transform-origin:0 0;font-weight:700;">следующего года.</span>
<span class="t" style="left:52.00px;top:599.41px;font-size:4.6px;line-height:6px;color:#f3e6f5;transform:scaleX(0.9644);transform-origin:0 0;font-weight:700;">В это время Пушкин просит императора разрешения выехать</span>
<span class="t" style="left:52.00px;top:606.61px;font-size:4.6px;line-height:6px;color:#f3e6f5;transform:scaleX(0.9619);transform-origin:0 0;font-weight:700;">за границу — там ему хочется новых впечатлений. Но получает</span>
<span class="t" style="left:52.00px;top:613.41px;font-size:4.6px;line-height:6px;color:#f3e6f5;transform:scaleX(0.9897);transform-origin:0 0;font-weight:700;">отказ.</span>
<span class="t" style="left:52.00px;top:622.21px;font-size:4.6px;line-height:6px;color:#f3e6f5;transform:scaleX(0.9864);transform-origin:0 0;font-weight:700;">Весной 1830 года, когда он вернулся в Москву, стало известно,</span>
<span class="t" style="left:52.00px;top:628.41px;font-size:4.6px;line-height:6px;color:#f3e6f5;transform:scaleX(0.9714);transform-origin:0 0;font-weight:700;">что родители Натальи дали согласие на брак.</span>
<span class="t" style="left:48.00px;top:584.61px;font-size:4.6px;line-height:6px;color:#f3e6f5;">•</span>
<span class="t" style="left:48.00px;top:599.41px;font-size:4.6px;line-height:6px;color:#f3e6f5;">•</span>
<span class="t" style="left:48.00px;top:622.21px;font-size:4.6px;line-height:6px;color:#f3e6f5;">•</span>
<span class="t" style="left:48.00px;top:685.05px;font-size:6.2px;line-height:7px;color:#f3e6f5;transform:scaleX(0.9258);transform-origin:0 0;">ЛЕТО 1830 ГОДА.  ПОДГОТОВКА К СВАДЬБЕ.</span>
<span class="t" style="left:52.00px;top:710.82px;font-size:6.3px;line-height:8px;color:#f3e6f5;transform:scaleX(1.0266);transform-origin:0 0;font-weight:700;">Лето прошло в свадебных хлопотах. Было</span>
<span class="t" style="left:52.00px;top:718.22px;font-size:6.3px;line-height:8px;color:#f3e6f5;transform:scaleX(1.0537);transform-origin:0 0;font-weight:700;">еще несколько поездок поэта из Москвы в</span>
<span class="t" style="left:52.00px;top:725.62px;font-size:6.3px;line-height:8px;color:#f3e6f5;transform:scaleX(1.0648);transform-origin:0 0;font-weight:700;">Петербург, а также к родственникам</span>
<span class="t" style="left:52.00px;top:733.02px;font-size:6.3px;line-height:8px;color:#f3e6f5;transform:scaleX(0.9552);transform-origin:0 0;font-weight:700;">невесты.</span>
<span class="t" style="left:52.00px;top:742.12px;font-size:6.3px;line-height:8px;color:#f3e6f5;transform:scaleX(1.0322);transform-origin:0 0;font-weight:700;">Свадьба из-за многочисленных дел</span>
<span class="t" style="left:52.00px;top:749.62px;font-size:6.3px;line-height:8px;color:#f3e6f5;transform:scaleX(1.0330);transform-origin:0 0;font-weight:700;">переносилась.</span>
<span class="t" style="left:48.00px;top:710.82px;font-size:6.3px;line-height:8px;color:#f3e6f5;">•</span>
<span class="t" style="left:48.00px;top:742.12px;font-size:6.3px;line-height:8px;color:#f3e6f5;">•</span>
<span class="t" style="left:48.00px;top:819.35px;font-size:6.2px;line-height:7px;color:#f3e6f5;transform:scaleX(0.9180);transform-origin:0 0;">ОСЕНЬ 1830 ГОДА. «БОЛДИНСКАЯ ОСЕНЬ»</span>
<span class="t" style="left:42.00px;top:827.25px;font-size:3.6px;line-height:4px;color:#f3e6f5;transform:scaleX(0.9320);transform-origin:0 0;font-weight:700;">Осенью 1830 года Пушкин отправляется в село</span>
<span class="t" style="left:42.00px;top:832.05px;font-size:3.6px;line-height:4px;color:#f3e6f5;transform:scaleX(0.9892);transform-origin:0 0;font-weight:700;">Болдино, где нужно было решить некоторые</span>
<span class="t" style="left:42.00px;top:836.95px;font-size:3.6px;line-height:4px;color:#f3e6f5;transform:scaleX(0.9725);transform-origin:0 0;font-weight:700;">вопросы перед свадьбой (отец передавал в</span>
<span class="t" style="left:42.00px;top:841.75px;font-size:3.6px;line-height:4px;color:#f3e6f5;transform:scaleX(0.9582);transform-origin:0 0;font-weight:700;">наследство Александру во владение часть</span>
<span class="t" style="left:42.00px;top:846.55px;font-size:3.6px;line-height:4px;color:#f3e6f5;transform:scaleX(0.9653);transform-origin:0 0;font-weight:700;">имения).</span>
<span class="t" style="left:42.00px;top:853.45px;font-size:3.6px;line-height:4px;color:#f3e6f5;transform:scaleX(0.9758);transform-origin:0 0;font-weight:700;">Пушкин пользуется уединением и погружается в</span>
<span class="t" style="left:42.00px;top:858.25px;font-size:3.6px;line-height:4px;color:#f3e6f5;transform:scaleX(0.9356);transform-origin:0 0;font-weight:700;">творчество.</span>
<span class="t" style="left:42.00px;top:864.75px;font-size:3.6px;line-height:4px;color:#f3e6f5;letter-spacing:-0.321px;font-weight:700;">Этот период, ставший известным под</span>
<span class="t" style="left:42.00px;top:869.55px;font-size:3.6px;line-height:4px;color:#f3e6f5;font-weight:700;">названием «Болдинская осень», — один из</span>
<span class="t" style="left:42.00px;top:874.35px;font-size:3.6px;line-height:4px;color:#f3e6f5;transform:scaleX(0.8816);transform-origin:0 0;font-weight:700;">самых продуктивных периодов творчества</span>
<span class="t" style="left:42.00px;top:879.15px;font-size:3.6px;line-height:4px;color:#f3e6f5;transform:scaleX(0.9037);transform-origin:0 0;font-weight:700;">поэта. В это время он дорабатывает роман</span>
<span class="t" style="left:42.00px;top:883.95px;font-size:3.6px;line-height:4px;color:#f3e6f5;transform:scaleX(0.9628);transform-origin:0 0;font-weight:700;">«Евгений Онегин», сочиняет «Повести</span>
<span class="t" style="left:42.00px;top:888.75px;font-size:3.6px;line-height:4px;color:#f3e6f5;transform:scaleX(0.8995);transform-origin:0 0;font-weight:700;">Белкина», «Домик в Коломне», «Маленькие</span>
<span class="t" style="left:42.00px;top:893.55px;font-size:3.6px;line-height:4px;color:#f3e6f5;transform:scaleX(0.9213);transform-origin:0 0;font-weight:700;">«В начале жизни школу помню я…», «Бесы» и</span>
<span class="t" style="left:42.00px;top:898.35px;font-size:3.6px;line-height:4px;color:#f3e6f5;transform:scaleX(0.9680);transform-origin:0 0;font-weight:700;">многие другие.</span>
<span class="t" style="left:38.50px;top:827.25px;font-size:3.6px;line-height:4px;color:#f3e6f5;">•</span>
<span class="t" style="left:38.50px;top:853.45px;font-size:3.6px;line-height:4px;color:#f3e6f5;">•</span>
<span class="t" style="left:38.50px;top:864.75px;font-size:3.6px;line-height:4px;color:#f3e6f5;">•</span>
<span class="t" style="left:48.00px;top:934.15px;font-size:6.2px;line-height:7px;color:#f3e6f5;transform:scaleX(0.9422);transform-origin:0 0;">5 ДЕКАБРЯ 1830 ГОДА. ВОЗВРАЩЕНИЕ В МОСКВУ.</span>
<span class="t" style="left:343.00px;top:326.34px;font-size:32.2px;line-height:39px;color:#f8edf8;transform:scaleX(0.9964);transform-origin:0 0;-webkit-text-stroke:.7px #4c0f62;">ЛЕТО</span>
<span class="t" style="left:434.87px;top:326.34px;font-size:32.2px;line-height:39px;color:#f8edf8;transform:scaleX(1.0625);transform-origin:0 0;-webkit-text-stroke:.7px #4c0f62;">1830</span>
<span class="t" style="left:517.60px;top:326.34px;font-size:32.2px;line-height:39px;color:#f8edf8;transform:scaleX(0.9516);transform-origin:0 0;-webkit-text-stroke:.7px #4c0f62;">ГОДА.</span>
<span class="t" style="left:619.98px;top:326.34px;font-size:32.2px;line-height:39px;color:#f8edf8;transform:scaleX(0.9576);transform-origin:0 0;-webkit-text-stroke:.7px #4c0f62;">ПОДГОТОВКА</span>
<span class="t" style="left:834.30px;top:326.34px;font-size:32.2px;line-height:39px;color:#f8edf8;-webkit-text-stroke:.7px #4c0f62;">К</span>
<span class="t" style="left:861.59px;top:326.34px;font-size:32.2px;line-height:39px;color:#f8edf8;transform:scaleX(0.9056);transform-origin:0 0;-webkit-text-stroke:.7px #4c0f62;">СВАДЬБЕ.</span>
<span class="t" style="left:366.25px;top:461.63px;font-size:32.8px;line-height:39px;color:#ffffff;transform:scaleX(1.1624);transform-origin:0 0;-webkit-text-stroke:.25px #fff;">Лето</span>
<span class="t" style="left:462.89px;top:461.63px;font-size:32.8px;line-height:39px;color:#ffffff;transform:scaleX(1.0538);transform-origin:0 0;-webkit-text-stroke:.25px #fff;">прошло</span>
<span class="t" style="left:602.25px;top:461.63px;font-size:32.8px;line-height:39px;color:#ffffff;-webkit-text-stroke:.25px #fff;">в</span>
<span class="t" style="left:631.36px;top:461.63px;font-size:32.8px;line-height:39px;color:#ffffff;transform:scaleX(1.1352);transform-origin:0 0;-webkit-text-stroke:.25px #fff;">свадебных</span>
<span class="t" style="left:830.00px;top:461.63px;font-size:32.8px;line-height:39px;color:#ffffff;transform:scaleX(1.1186);transform-origin:0 0;-webkit-text-stroke:.25px #fff;">хлопотах.</span>
<span class="t" style="left:1007.32px;top:461.63px;font-size:32.8px;line-height:39px;color:#ffffff;transform:scaleX(1.0898);transform-origin:0 0;-webkit-text-stroke:.25px #fff;">Было</span>
<span class="t" style="left:365.87px;top:500.93px;font-size:32.8px;line-height:39px;color:#ffffff;transform:scaleX(1.1256);transform-origin:0 0;-webkit-text-stroke:.25px #fff;">еще</span>
<span class="t" style="left:447.70px;top:500.93px;font-size:32.8px;line-height:39px;color:#ffffff;transform:scaleX(1.1512);transform-origin:0 0;-webkit-text-stroke:.25px #fff;">несколько</span>
<span class="t" style="left:635.15px;top:500.93px;font-size:32.8px;line-height:39px;color:#ffffff;transform:scaleX(1.1737);transform-origin:0 0;-webkit-text-stroke:.25px #fff;">поездок</span>
<span class="t" style="left:789.90px;top:500.93px;font-size:32.8px;line-height:39px;color:#ffffff;transform:scaleX(1.0518);transform-origin:0 0;-webkit-text-stroke:.25px #fff;">поэта</span>
<span class="t" style="left:893.31px;top:500.93px;font-size:32.8px;line-height:39px;color:#ffffff;transform:scaleX(1.0966);transform-origin:0 0;-webkit-text-stroke:.25px #fff;">из</span>
<span class="t" style="left:942.20px;top:500.93px;font-size:32.8px;line-height:39px;color:#ffffff;transform:scaleX(1.1481);transform-origin:0 0;-webkit-text-stroke:.25px #fff;">Москвы</span>
<span class="t" style="left:1091.25px;top:500.93px;font-size:32.8px;line-height:39px;color:#ffffff;-webkit-text-stroke:.25px #fff;">в</span>
<span class="t" style="left:366.48px;top:540.13px;font-size:32.8px;line-height:39px;color:#ffffff;transform:scaleX(1.1343);transform-origin:0 0;-webkit-text-stroke:.25px #fff;">Петербург,</span>
<span class="t" style="left:561.25px;top:540.13px;font-size:32.8px;line-height:39px;color:#ffffff;-webkit-text-stroke:.25px #fff;">а</span>
<span class="t" style="left:593.75px;top:540.13px;font-size:32.8px;line-height:39px;color:#ffffff;transform:scaleX(1.1168);transform-origin:0 0;-webkit-text-stroke:.25px #fff;">также</span>
<span class="t" style="left:704.62px;top:540.13px;font-size:32.8px;line-height:39px;color:#ffffff;-webkit-text-stroke:.25px #fff;">к</span>
<span class="t" style="left:732.19px;top:540.13px;font-size:32.8px;line-height:39px;color:#ffffff;transform:scaleX(1.1566);transform-origin:0 0;-webkit-text-stroke:.25px #fff;">родственникам</span>
<span class="t" style="left:365.75px;top:579.63px;font-size:32.8px;line-height:39px;color:#ffffff;transform:scaleX(1.1262);transform-origin:0 0;-webkit-text-stroke:.25px #fff;">невесты.</span>
<span class="t" style="left:365.93px;top:627.93px;font-size:32.8px;line-height:39px;color:#ffffff;transform:scaleX(1.0744);transform-origin:0 0;-webkit-text-stroke:.25px #fff;">Свадьба</span>
<span class="t" style="left:519.79px;top:627.93px;font-size:32.8px;line-height:39px;color:#ffffff;transform:scaleX(1.1040);transform-origin:0 0;-webkit-text-stroke:.25px #fff;">из-за</span>
<span class="t" style="left:618.68px;top:627.93px;font-size:32.8px;line-height:39px;color:#ffffff;transform:scaleX(1.1584);transform-origin:0 0;-webkit-text-stroke:.25px #fff;">многочисленных</span>
<span class="t" style="left:924.00px;top:627.93px;font-size:32.8px;line-height:39px;color:#ffffff;transform:scaleX(1.1147);transform-origin:0 0;-webkit-text-stroke:.25px #fff;">дел</span>
<span class="t" style="left:365.72px;top:667.13px;font-size:32.8px;line-height:39px;color:#ffffff;transform:scaleX(1.1394);transform-origin:0 0;-webkit-text-stroke:.25px #fff;">переносилась.</span>
<span class="t" style="left:8.75px;top:964.64px;font-size:12px;line-height:14px;color:#444;transform:scaleX(0.8911);transform-origin:0 0;">Слайд 8 из 11</span>
<span class="t" style="left:129.50px;top:964.64px;font-size:12px;line-height:14px;color:#444;transform:scaleX(0.9739);transform-origin:0 0;">русский</span>
<span class="t" style="left:765.00px;top:964.64px;font-size:12px;line-height:14px;color:#444;transform:scaleX(0.9681);transform-origin:0 0;">Заметки</span>
<span class="t" style="left:846.00px;top:964.64px;font-size:12px;line-height:14px;color:#444;transform:scaleX(0.9959);transform-origin:0 0;">Примечания</span>
<span class="t" style="left:1223.75px;top:964.64px;font-size:12px;line-height:14px;color:#444;letter-spacing:-1.477px;">76 %</span>
<span class="t" style="left:1132.50px;top:996.84px;font-size:12px;line-height:14px;color:#fff;transform:scaleX(0.8722);transform-origin:0 0;">РУС</span>
<span class="t" style="left:1180.50px;top:987.64px;font-size:12px;line-height:14px;color:#fff;transform:scaleX(0.8895);transform-origin:0 0;">13:46</span>
<span class="t" style="left:1167.00px;top:1005.14px;font-size:12px;line-height:14px;color:#fff;transform:scaleX(0.8984);transform-origin:0 0;">01.12.2019</span>
<span class="t" style="left:1252.00px;top:1005.86px;font-size:10.5px;line-height:13px;color:#fff;font-weight:700;z-index:3;">4</span>
</body>
</html>
